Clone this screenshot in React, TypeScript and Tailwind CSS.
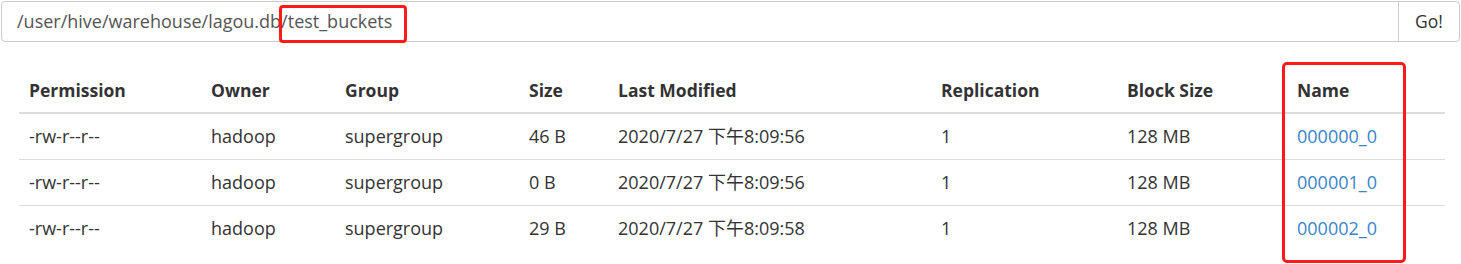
import React from "react";

/* ---------------- DATA ---------------- */
const COLUMNS = [
  { label: "Permission", w: "w-[182px]" },
  { label: "Owner", w: "w-[134px]" },
  { label: "Group", w: "w-[184px]" },
  { label: "Size", w: "w-[89px]" },
  { label: "Last Modified", w: "w-[323px]" },
  { label: "Replication", w: "w-[186px]" },
  { label: "Block Size", w: "w-[170px]" },
  { label: "Name", w: "w-[158px]" },
];

const FILES = [
  { perm: "-rw-r--r--", owner: "hadoop", group: "supergroup", size: "46 B", modified: "2020/7/27 下午8:09:56", rep: "1", block: "128 MB", name: "000000_0" },
  { perm: "-rw-r--r--", owner: "hadoop", group: "supergroup", size: "0 B", modified: "2020/7/27 下午8:09:56", rep: "1", block: "128 MB", name: "000001_0" },
  { perm: "-rw-r--r--", owner: "hadoop", group: "supergroup", size: "29 B", modified: "2020/7/27 下午8:09:58", rep: "1", block: "128 MB", name: "000002_0" },
];

const FONT = "font-['Open_Sans','Noto_Sans_CJK_SC',sans-serif]";

/* ---------------- PAGE ---------------- */
export default function App() {
  return (
    <div className={`relative w-[1461px] h-[264px] bg-white text-[#333] ${FONT} overflow-hidden`}>
      {/* PATH INPUT */}
      <div className="ml-px mt-px flex h-[41px] w-[1459px] rounded border border-[#ccc]">
        <div className="flex flex-1 items-center pl-[15px] text-[18px] text-[#555]">
          /user/hive/warehouse/lagou.db/test_buckets
        </div>
        <button className="w-[61px] border-l border-[#ccc] text-[17.5px] text-[#333]">Go!</button>
      </div>

      {/* FILE TABLE */}
      <table className="ml-[19px] mt-[25px] w-[1425px] table-fixed border-collapse text-[18px]">
        <thead>
          <tr className="h-[46px] border-b-2 border-[#ddd]">
            {COLUMNS.map((c) => (
              <th key={c.label} className={`${c.w} px-[10px] pt-[2px] text-left text-[17.5px] font-bold`}>
                {c.label}
              </th>
            ))}
          </tr>
        </thead>
        <tbody>
          {FILES.map((f, i) => (
            <tr key={f.name} className={`h-[46px] ${i < FILES.length - 1 ? "border-b border-[#ddd]" : ""}`}>
              <td className="px-[10px]">{f.perm}</td>
              <td className="px-[10px]">{f.owner}</td>
              <td className="px-[10px]">{f.group}</td>
              <td className="px-[10px]">{f.size}</td>
              <td className="px-[10px]">{f.modified}</td>
              <td className="px-[10px]">{f.rep}</td>
              <td className="px-[10px]">{f.block}</td>
              <td className="px-[10px]">
                <a href="#" className="text-[#3a84cc]">
                  {f.name}
                </a>
              </td>
            </tr>
          ))}
        </tbody>
      </table>

      {/* RED ANNOTATIONS */}
      <div className="pointer-events-none absolute left-[279px] top-[5px] h-[38px] w-[128px] rounded-[4px] border-[3px] border-[#ff1a1a]" />
      <div className="pointer-events-none absolute left-[1282px] top-[62px] h-[201px] w-[124px] rounded-[5px] border-[3px] border-[#ff1a1a]" />
    </div>
  );
}
